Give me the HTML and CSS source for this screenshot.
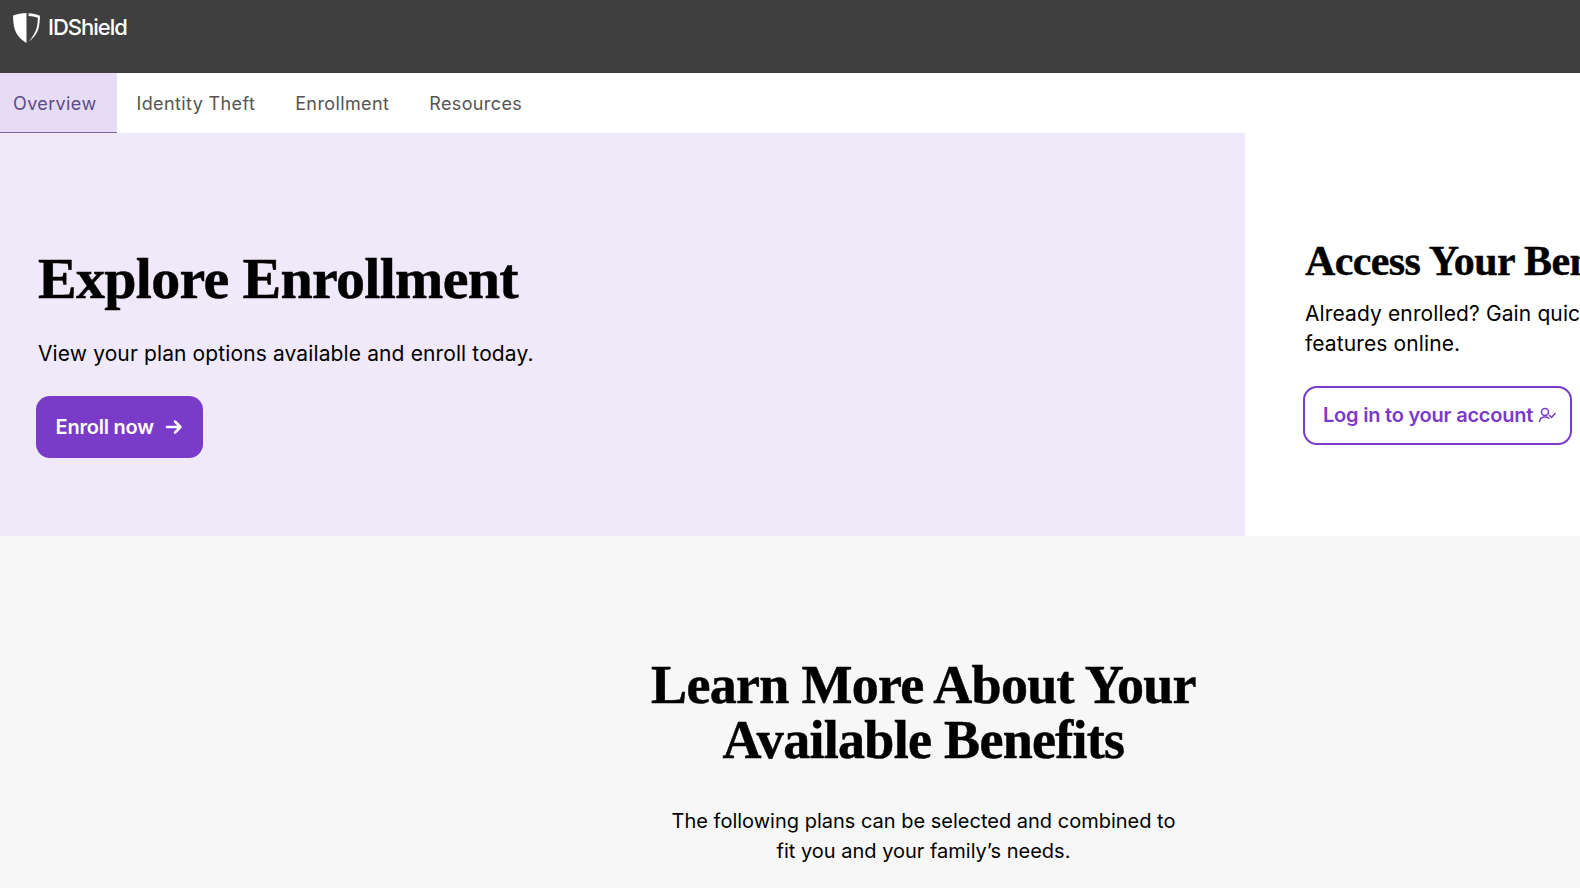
FILE: index.html
```html
<!DOCTYPE html>
<html lang="en">

<head>
  <meta charset="UTF-8">
  <meta name="viewport" content="width=device-width, initial-scale=1.0">
  <title>IDShield</title>
  <link rel="stylesheet" href="styles.css">
</head>

<body>
  <header class="topbar">
    <a class="logo" href="#">
      <svg class="logo-mark" viewBox="0 0 28 30" width="29" height="31" aria-hidden="true">
        <path d="M1 3.500C5 1.800 9.500 1 14 1v29C9 27 3.500 22 2 14.500 1.300 11 1 7 1 3.500z" fill="#fff" />
        <path d="M16 1.200c3.800.2 7.600 1 11 2.400 0 4-.4 8-1.200 11.300C24.500 20.500 20.500 25.500 16.500 28.500c3-4 6.500-9 7.700-14.500.5-2.800.8-5.500.8-8.500-2.800-.9-5.800-1.500-9-1.700z" fill="#fff" />
      </svg>
      <span class="logo-text">IDShield</span>
    </a>
  </header>

  <nav class="tabs">
    <a class="tab active" href="#">Overview</a>
    <a class="tab" href="#">Identity Theft</a>
    <a class="tab" href="#">Enrollment</a>
    <a class="tab" href="#">Resources</a>
  </nav>

  <section class="hero">
    <div class="hero-main">
      <h1>Explore Enrollment</h1>
      <p>View your plan options available and enroll today.</p>
      <a class="btn btn-solid" href="#">
        Enroll now
        <svg viewBox="0 0 18 18" width="18" height="18" fill="none" stroke="currentColor" stroke-width="2.500" stroke-linecap="round" stroke-linejoin="round" aria-hidden="true">
          <path d="M2 9h13.500M10 3.500 15.500 9 10 14.500" />
        </svg>
      </a>
    </div>
    <div class="hero-side">
      <h2>Access Your Benefits</h2>
      <p>Already enrolled? Gain quick access to your plan<br>features online.</p>
      <a class="btn btn-outline" href="#">
        Log in to your account
        <svg viewBox="0 0 18 18" width="18" height="18" fill="none" stroke="currentColor" stroke-width="1.500" stroke-linecap="round" stroke-linejoin="round" aria-hidden="true">
          <circle cx="7" cy="6" r="3.500" />
          <path d="M1.500 15.500c.5-3 2.800-4.500 5.500-4.500 1.500 0 2.800.4 3.800 1.300M11.500 9.500l2 2 3.500-4" />
        </svg>
      </a>
    </div>
  </section>

  <section class="benefits">
    <h2>Learn More About Your<br>Available Benefits</h2>
    <p>The following plans can be selected and combined to<br>fit you and your family’s needs.</p>
  </section>
</body>

</html>
```

FILE: styles.css
```css
*,
*::before,
*::after {
  box-sizing: border-box;
}

:root {
  --purple: #7a3bc9;
  --lilac: #f0e9fa;
  --lilac-dark: #e6dcf5;
  --ink: #000;
}

html,
body {
  margin: 0;
  padding: 0;
  height: 888px;
  overflow: hidden;
  background: #fff;
  color: var(--ink);
  font-family: Inter, 'Liberation Sans', sans-serif;
}

a {
  text-decoration: none;
}

.topbar {
  height: 73px;
  background: #3f3f3f;
  padding: 12px 0 0 12px;
}

.logo {
  display: flex;
  align-items: flex-start;
  gap: 7px;
  color: #fff;
}

.logo-text {
  margin-top: 1px;
  font-size: 22px;
  font-weight: 500;
  line-height: 29px;
  letter-spacing: -1px;
}

.tabs {
  display: flex;
  height: 60px;
}

.tab {
  padding: 1px 20px 0;
  line-height: 60px;
  font-size: 18px;
  letter-spacing: 0.38px;
  color: #555;
}

.tab.active {
  padding: 1px 20px 0 13px;
  background: var(--lilac-dark);
  border-bottom: 1px solid #8263ad;
  color: #5e4a85;
}

.hero {
  display: flex;
  width: 1580px;
  height: 403px;
  overflow: hidden;
}

.hero-main {
  flex: 0 0 1245px;
  padding: 114px 0 0 38px;
  background: var(--lilac);
}

.hero h1 {
  margin: 0;
  font: bold 58px/64px 'Liberation Serif', serif;
  letter-spacing: -0.7px;
  -webkit-text-stroke: 0.5px var(--ink);
}

.hero-main p {
  margin: 28px 0 0;
  font-size: 21px;
  line-height: 30px;
  letter-spacing: 0.12px;
}

.btn {
  display: inline-flex;
  align-items: center;
  font-weight: 600;
  font-size: 20px;
  letter-spacing: -0.22px;
}

.btn-solid {
  gap: 11px;
  margin: 27px 0 0 -2px;
  height: 62px;
  padding: 0 20px 0 19.500px;
  border-radius: 14px;
  background: var(--purple);
  color: #fff;
}

.hero-side {
  flex: none;
  width: 600px;
  padding: 103px 0 0 60px;
}

.hero-side h2 {
  margin: 0;
  font: bold 42px/50px 'Liberation Serif', serif;
  letter-spacing: -0.6px;
  -webkit-text-stroke: 0.4px var(--ink);
  white-space: nowrap;
}

.hero-side p {
  margin: 13px 0 0;
  font-size: 21px;
  line-height: 30px;
  letter-spacing: 0.12px;
}

.btn-outline {
  gap: 5px;
  margin: 27px 0 0 -2px;
  height: 59px;
  padding: 0 14px 2px 18px;
  border: 2px solid var(--purple);
  border-radius: 14px;
  color: var(--purple);
}

.benefits {
  height: 352px;
  padding: 122px 0 0 267px;
  background: #f7f7f7;
  text-align: center;
}

.benefits h2 {
  margin: 0;
  font: bold 54px/55px 'Liberation Serif', serif;
  letter-spacing: -0.7px;
  -webkit-text-stroke: 0.5px var(--ink);
}

.benefits p {
  margin: 38px 0 0;
  font-size: 20px;
  line-height: 30px;
}
```
